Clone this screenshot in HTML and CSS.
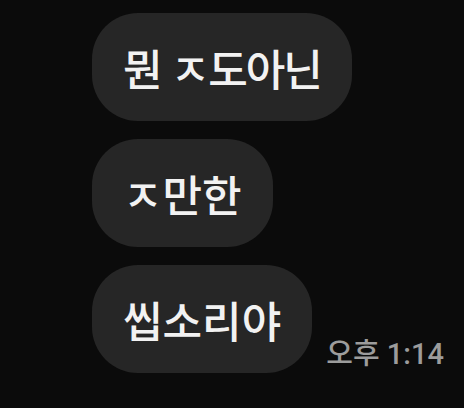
FILE: index.html
```html
<!DOCTYPE html>
<html lang="ko">

<head>
    <meta charset="utf-8">
    <meta name="viewport" content="width=device-width, initial-scale=1.0">
    <title>채팅</title>
    <link rel="stylesheet" href="styles.css">
</head>

<body>

    <div class="chat">
        <div class="row">
            <div class="bubble tight">뭔 ㅈ도아닌</div>
        </div>
        <div class="row">
            <div class="bubble">ㅈ만한</div>
        </div>
        <div class="row">
            <div class="bubble">씹소리야</div>
            <span class="time">오후 1:14</span>
        </div>
    </div>

</body>

</html>
```

FILE: styles.css
```css
body {
    margin: 0;
    background-color: #0b0b0b;
    font-family: "Noto Sans CJK KR", "Noto Sans", sans-serif;
}

.chat {
    display: flex;
    flex-direction: column;
    gap: 18px;
    padding-top: 13px;
    padding-left: 92px;
}

.row {
    display: flex;
    align-items: flex-end;
    gap: 14px;
}

.bubble {
    display: flex;
    align-items: center;
    height: 108px;
    padding: 0 31px;
    border-radius: 46px;
    background-color: #262626;
    color: #f2f2f2;
    font-size: 43px;
    font-weight: 500;
    white-space: nowrap;
}

.tight {
    letter-spacing: -2px;
}

.time {
    color: #9c9c9c;
    font-family: Roboto, "Noto Sans CJK KR", sans-serif;
    font-size: 29px;
    font-weight: 500;
    line-height: 1;
    padding-bottom: 4px;
}
```
